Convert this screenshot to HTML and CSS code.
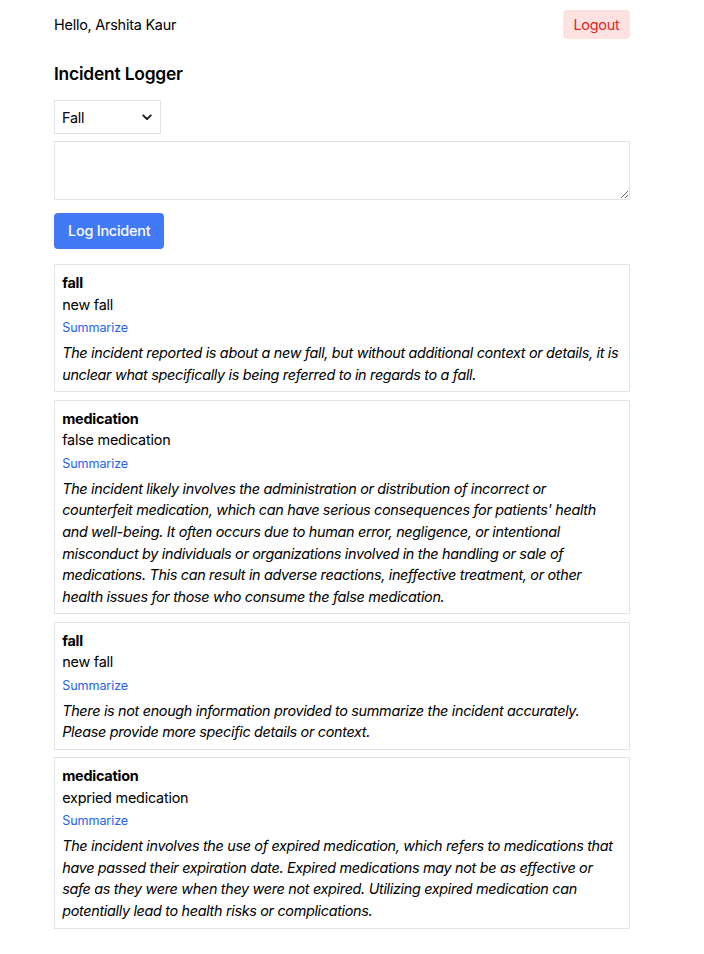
FILE: index.html
```html
<!DOCTYPE html>
<html lang="en">
<head>
<meta charset="utf-8">
<title>Incident Logger</title>
<link rel="stylesheet" href="styles.css">
</head>
<body>
<div class="page">
  <header class="topbar">
    <span class="greeting">Hello, Arshita Kaur</span>
    <button class="logout">Logout</button>
  </header>
  <h1 class="title">Incident Logger</h1>
  <div class="select-wrap">
    <select class="type-select">
      <option>Fall</option>
      <option>Medication</option>
    </select>
    <svg class="chev" width="10" height="7" viewBox="0 0 10 7"><path d="M1.2 1.4 L5 5.2 L8.8 1.4" fill="none" stroke="#111" stroke-width="1.8" stroke-linecap="round" stroke-linejoin="round"/></svg>
  </div>
  <textarea class="desc-input"></textarea>
  <button class="log-btn">Log Incident</button>

  <div class="list">
    <div class="card">
      <div class="c-type">fall</div>
      <div class="c-desc">new fall</div>
      <button class="summ">Summarize</button>
      <p class="c-sum">The incident reported is about a new fall, but without additional context or details, it is unclear what specifically is being referred to in regards to a fall.</p>
    </div>
    <div class="card">
      <div class="c-type">medication</div>
      <div class="c-desc">false medication</div>
      <button class="summ">Summarize</button>
      <p class="c-sum">The incident likely involves the administration or distribution of incorrect or<br>counterfeit medication, which can have serious consequences for patients' health and well-being. It often occurs due to human error, negligence, or intentional misconduct by individuals or organizations involved in the handling or sale of medications. This can result in adverse reactions, ineffective treatment, or other health issues for those who consume the false medication.</p>
    </div>
    <div class="card">
      <div class="c-type">fall</div>
      <div class="c-desc">new fall</div>
      <button class="summ">Summarize</button>
      <p class="c-sum">There is not enough information provided to summarize the incident accurately. Please provide more specific details or context.</p>
    </div>
    <div class="card">
      <div class="c-type">medication</div>
      <div class="c-desc">expried medication</div>
      <button class="summ">Summarize</button>
      <p class="c-sum">The incident involves the use of expired medication, which refers to medications that have passed their expiration date. Expired medications may not be as effective or safe as they were when they were not expired. Utilizing expired medication can potentially lead to health risks or complications.</p>
    </div>
  </div>
</div>
</body>
</html>
```
FILE: styles.css
```css
* { box-sizing: border-box; }
body {
  margin: 0;
  background: #fff;
  color: #000;
  font-family: Inter, "Liberation Sans", sans-serif;
  font-size: 14.4px;
  line-height: 21.6px;
  letter-spacing: -0.22px;
}
.page {
  width: 576px;
  margin-left: 54px;
  padding: 10px 0 24px;
}
.topbar {
  display: flex;
  justify-content: space-between;
  align-items: center;
  height: 29px;
}
.greeting { font-size: 14.4px; }
.logout {
  font: inherit;
  letter-spacing: inherit;
  color: #dc2626;
  background: #fee2e2;
  border: none;
  border-radius: 4px;
  height: 29px;
  padding: 0 10.5px;
  cursor: pointer;
}
.title {
  font-size: 17.4px;
  font-weight: 600;
  line-height: 25px;
  margin: 22px 0 14px;
  letter-spacing: -0.2px;
}
.select-wrap {
  position: relative;
  width: 107px;
  height: 34px;
}
.type-select {
  -webkit-appearance: none;
  appearance: none;
  width: 107px;
  height: 34px;
  border: 1px solid #e2e3e7;
  border-radius: 0;
  background: #fff;
  font: inherit;
  letter-spacing: inherit;
  color: #000;
  padding: 1px 7px 0;
  margin: 0;
  display: block;
}
.chev {
  position: absolute;
  right: 9px;
  top: 14px;
  pointer-events: none;
}
.desc-input {
  display: block;
  width: 576px;
  height: 59px;
  margin: 7px 0 13px;
  border: 1px solid #e2e3e7;
  border-radius: 0;
  font: inherit;
  resize: vertical;
}
.log-btn {
  display: block;
  font: inherit;
  letter-spacing: inherit;
  font-weight: 500;
  color: #fff;
  background: #4279f4;
  border: none;
  border-radius: 4px;
  height: 36px;
  padding: 0 14px;
  cursor: pointer;
}
.list {
  margin-top: 15px;
  display: flex;
  flex-direction: column;
  gap: 7.2px;
}
.card {
  border: 1px solid #e2e3e7;
  padding: 7px 7.2px 6px;
}
.c-type { font-weight: 700; }
.summ {
  display: block;
  font: inherit;
  letter-spacing: -0.1px;
  font-size: 12.6px;
  line-height: 18px;
  color: #2563eb;
  background: none;
  border: none;
  padding: 0;
  margin: 4px 0 5px;
  cursor: pointer;
}
.c-sum {
  margin: 0;
  font-style: italic;
  letter-spacing: -0.32px;
}
```
